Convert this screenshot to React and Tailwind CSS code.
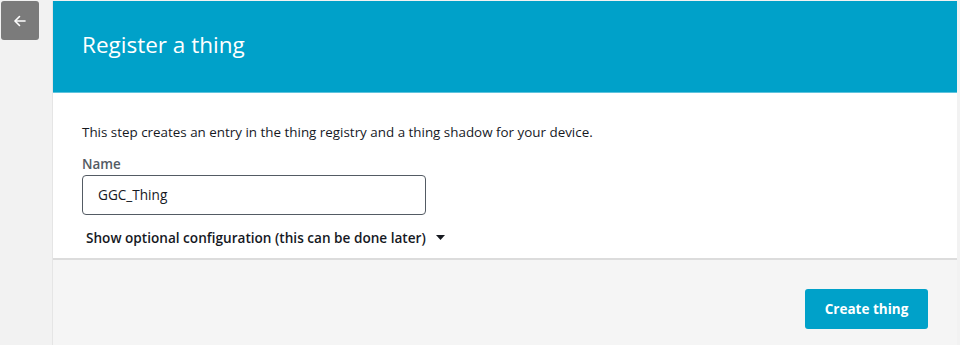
import React from 'react';

const BackButton = () => (
  <button className="mt-px ml-px w-[38px] h-[39px] rounded-[3px] bg-[#7b7b7b] flex items-center justify-center">
    <svg width="14" height="14" viewBox="0 0 14 14" fill="none" stroke="#fff" strokeWidth="1.6" strokeLinecap="round" strokeLinejoin="round">
      <path d="M12 7H2.5" />
      <path d="M6.5 2.5L2 7l4.5 4.5" />
    </svg>
  </button>
);

const App = () => {
  return (
    <div className="w-[960px] h-[345px] bg-[#f2f2f2] flex overflow-hidden font-['Open_Sans',sans-serif]">
      <div className="w-[52px] shrink-0">
        <BackButton />
      </div>
      <div className="w-[905px] mt-px flex flex-col border-l border-[#e5e5e5]">
        <div className="h-[92px] bg-[#00a1c9] border-b border-[#5fc3dd] flex items-center px-[29px]">
          <h1 className="text-[22.5px] text-white leading-none pb-[2px]">Register a thing</h1>
        </div>
        <div className="bg-white h-[167px] px-[29px] pt-[29px] border-b-2 border-[#dcdcdc]">
          <p className="text-[13.4px] leading-[20px] text-[#16191f]">
            This step creates an entry in the thing registry and a thing shadow for your device.
          </p>
          <label className="block mt-[12px] text-[13.4px] leading-[20px] font-semibold text-[#545b64]">Name</label>
          <div className="mt-[1px] w-[344px] h-[40px] border border-[#545b64] rounded-[4px] flex items-center px-[15px] text-[13.6px] text-[#16191f]">
            GGC_Thing
          </div>
          <div className="mt-[13px] ml-[4px] flex items-center gap-[10px] text-[13.6px] font-semibold text-[#16191f]">
            <span>Show optional configuration (this can be done later)</span>
            <svg width="9" height="6" viewBox="0 0 9 6">
              <path d="M0 0h9L4.5 5z" fill="#16191f" />
            </svg>
          </div>
        </div>
        <div className="flex-1 bg-[#f5f5f5] flex justify-end items-start pt-[29px] pr-[29px]">
          <button className="w-[123px] h-[40px] bg-[#00a1c9] rounded-[3px] text-white text-[13.5px] font-bold">
            Create thing
          </button>
        </div>
      </div>
    </div>
  );
};

export default App;
